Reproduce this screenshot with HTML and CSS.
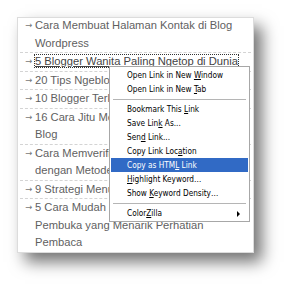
FILE: index.html
```html
<!DOCTYPE html>
<html>
<head>
<meta charset="utf-8">
<link rel="stylesheet" href="styles.css">
</head>
<body>
<div class="stage">
  <div class="card">
    <ul class="posts">
      <li><span class="arr">→</span><a>Cara Membuat Halaman Kontak di Blog Wordpress</a></li>
      <li><span class="arr">→</span><a class="focus">5 Blogger Wanita Paling Ngetop di Dunia</a></li>
      <li><span class="arr">→</span><a>20 Tips Ngeblog Paling Ampuh</a></li>
      <li><span class="arr">→</span><a>10 Blogger Terkaya di Dunia</a></li>
      <li><span class="arr">→</span><a>16 Cara Jitu Mendatangkan Pengunjung<br>Blog</a></li>
      <li><span class="arr">→</span><a>Cara Memverifikasi Blog di Google<br>dengan Metode HTML</a></li>
      <li><span class="arr">→</span><a>9 Strategi Menulis Artikel</a></li>
      <li><span class="arr">→</span><a>5 Cara Mudah Membuat Kalimat<br>Pembuka yang Menarik Perhatian Pembaca</a></li>
    </ul>
  </div>
  <div class="menu">
    <div class="item">Open Link in New <u>W</u>indow</div>
    <div class="item">Open Link in New <u>T</u>ab</div>
    <div class="sep"></div>
    <div class="item">Bookmark This <u>L</u>ink</div>
    <div class="item">Save Lin<u>k</u> As...</div>
    <div class="item">Sen<u>d</u> Link...</div>
    <div class="item">Copy Link Loc<u>a</u>tion</div>
    <div class="item active">Copy as HTM<u>L</u> Link</div>
    <div class="item"><u>H</u>ighlight Keyword…</div>
    <div class="item">Show <u>K</u>eyword Density…</div>
    <div class="sep"></div>
    <div class="item sub">Color<u>Z</u>illa<span class="tri"></span></div>
  </div>
</div>
</body>
</html>
```

FILE: styles.css
```css
html, body {
  margin: 0;
  padding: 0;
  background: #fff;
}
.stage {
  position: relative;
  width: 300px;
  height: 287px;
  overflow: hidden;
  padding: 17px 0 0 17px;
  box-sizing: border-box;
}
.card {
  width: 237px;
  height: 236px;
  box-sizing: border-box;
  border: 1px solid #dcdcdc;
  background: #fff;
  overflow: hidden;
  box-shadow: 8px 9px 15px rgba(0, 0, 0, 0.55);
}
.posts {
  list-style: none;
  margin: -1px 2px 0 2px;
  padding: 0;
  font-family: "Liberation Sans", Arial, sans-serif;
  font-size: 11.2px;
  line-height: 17.5px;
  color: #5f5f5f;
}
.posts li {
  padding-left: 15px;
  padding-right: 2px;
  text-indent: -10px;
  border-bottom: 1px dashed #d4d4d4;
}
.arr {
  display: inline-block;
  width: 10px;
  text-indent: 0;
  line-height: 8px;
  vertical-align: 1px;
  font-family: "DejaVu Sans", sans-serif;
  font-size: 8.5px;
  color: #777;
}
.posts a {
  color: #5f5f5f;
}
.posts a.focus {
  color: #444;
  text-decoration: underline;
  outline: 1px dotted #333;
  outline-offset: 0;
}
.menu {
  position: absolute;
  left: 109px;
  top: 66px;
  width: 141px;
  box-sizing: border-box;
  border: 1px solid #a7a7a7;
  background: #fff;
  padding: 1px 1px;
  font-family: "DejaVu Sans Condensed", "DejaVu Sans", sans-serif;
  font-size: 8.2px;
  color: #000;
}
.item {
  height: 14px;
  line-height: 14px;
  padding-left: 16px;
  position: relative;
}
.item.active {
  background: #316ac5;
  color: #fff;
}
.sep {
  height: 1px;
  background: #b5b5b5;
  margin: 3px 2px 2px 2px;
}
.tri {
  position: absolute;
  right: 8px;
  top: 5px;
  width: 0;
  height: 0;
  border-left: 3px solid #000;
  border-top: 3px solid transparent;
  border-bottom: 3px solid transparent;
}
```
